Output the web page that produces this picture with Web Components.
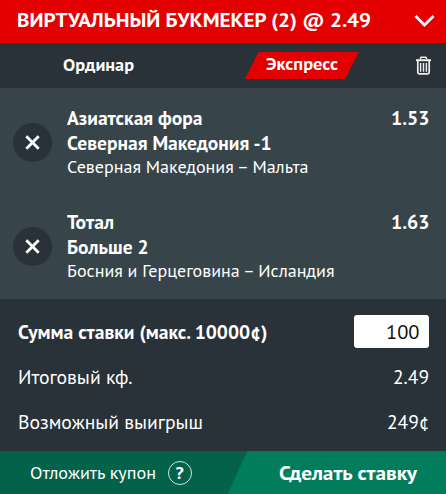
<!DOCTYPE html>
<html lang="ru">
<head>
<meta charset="utf-8">
<title>Купон</title>
<style>
  body {
    margin: 0;
    background: #283238;
    color: #fff;
    font-family: "PT Sans", "Noto Sans", "Open Sans", sans-serif;
  }
</style>
</head>
<body>

<bet-slip>
  <slip-header slot="header"><fit-text width="354">ВИРТУАЛЬНЫЙ БУКМЕКЕР (2) @ 2.49</fit-text></slip-header>
  <slip-tabs slot="tabs">
    <fit-text slot="single" width="71">Ординар</fit-text>
    <fit-text slot="express" width="72">Экспресс</fit-text>
  </slip-tabs>

  <bet-item>
    <fit-text slot="market" width="135.5">Азиатская фора</fit-text>
    <fit-text slot="pick" width="204.5">Северная Македония -1</fit-text>
    <fit-text slot="match" width="241.5">Северная Македония – Мальта</fit-text>
    <fit-text slot="odds" width="38.5">1.53</fit-text>
  </bet-item>
  <bet-item>
    <fit-text slot="market" width="47">Тотал</fit-text>
    <fit-text slot="pick" width="81.5">Больше 2</fit-text>
    <fit-text slot="match" width="267.5">Босния и Герцеговина – Исландия</fit-text>
    <fit-text slot="odds" width="38.5">1.63</fit-text>
  </bet-item>

  <slip-row slot="totals" class="stake">
    <fit-text slot="label" width="249.5">Сумма ставки (макс. 10000¢)</fit-text>
    <stake-field><fit-text width="33.5">100</fit-text></stake-field>
  </slip-row>
  <slip-row slot="totals">
    <fit-text slot="label" width="114.5">Итоговый кф.</fit-text>
    <fit-text width="36">2.49</fit-text>
  </slip-row>
  <slip-row slot="totals">
    <fit-text slot="label" width="185">Возможный выигрыш</fit-text>
    <fit-text width="42.5">249¢</fit-text>
  </slip-row>

  <slip-footer slot="footer">
    <fit-text slot="save" width="126">Отложить купон</fit-text>
    <fit-text slot="place" width="138">Сделать ставку</fit-text>
  </slip-footer>
</bet-slip>

<script>
function define(name, html) {
  customElements.define(
    name,
    class extends HTMLElement {
      constructor() {
        super();
        this.attachShadow({ mode: "open" });
        this.shadowRoot.innerHTML = html;
      }
    }
  );
}

define("bet-slip", `
  <style>
    :host {
      display: flex;
      flex-direction: column;
      width: 446px;
      height: 494px;
      overflow: hidden;
    }
    .items {
      box-sizing: border-box;
      height: 211px;
      padding-top: 1px;
      background: #37454b;
    }
    .totals {
      flex: 1;
      padding-top: 10px;
    }
  </style>
  <slot name="header"></slot>
  <slot name="tabs"></slot>
  <div class="items"><slot></slot></div>
  <div class="totals"><slot name="totals"></slot></div>
  <slot name="footer"></slot>
`);

define("slip-header", `
  <style>
    :host {
      box-sizing: border-box;
      display: flex;
      align-items: center;
      justify-content: space-between;
      height: 43px;
      padding: 0 11px 2px 17px;
      background: #e30000;
      font-size: 20px;
      font-weight: 700;
      line-height: 41px;
    }
    svg { display: block; }
  </style>
  <slot></slot>
  <svg width="21" height="14" viewBox="0 0 21 14" fill="none" stroke="#fff" stroke-width="2.8">
    <path d="M1.5 2 10.5 11 19.5 2"/>
  </svg>
`);

define("slip-tabs", `
  <style>
    :host {
      box-sizing: border-box;
      display: flex;
      align-items: center;
      height: 45px;
      padding: 0 14px 0 63px;
      font-size: 18px;
      font-weight: 700;
      line-height: 27px;
    }
    .single { width: 182px; height: 27px; margin-top: -3px; }
    .express {
      box-sizing: border-box;
      width: 114px;
      height: 27px;
      padding-left: 20.5px;
      background: #e30000;
      clip-path: polygon(13.5px 0, 100% 0, 100px 100%, 0 100%);
      line-height: 24px;
    }
    svg { display: block; margin-left: auto; }
  </style>
  <div class="single"><slot name="single"></slot></div>
  <div class="express"><slot name="express"></slot></div>
  <svg width="17" height="19" viewBox="0 0 17 19" fill="none" stroke="#eceeee">
    <path d="M1 4.2h15" stroke-width="2"/>
    <path d="M5.5 3.2V2.1Q5.5 1.2 6.4 1.2h4.2q.9 0 .9.9v1.1" stroke-width="1.5"/>
    <path d="M2.8 5v11.3q0 1.5 1.5 1.5h8.4q1.5 0 1.5-1.5V5" stroke-width="1.7"/>
    <path d="M5.6 7v8.8M8.5 7v8.8M11.4 7v8.8" stroke-width="1.4"/>
  </svg>
`);

define("bet-item", `
  <style>
    :host {
      box-sizing: border-box;
      display: grid;
      grid-template-columns: 39px 1fr auto;
      column-gap: 14.5px;
      height: 104px;
      padding: 16px 17px 16px 13px;
      font-size: 19.5px;
      font-weight: 700;
      line-height: 25px;
    }
    .remove {
      align-self: center;
      display: grid;
      place-items: center;
      width: 39px;
      height: 39px;
      border-radius: 50%;
      background: #283238;
    }
    .lines { display: flex; flex-direction: column; align-items: flex-start; }
    .match { font-size: 18px; font-weight: 400; line-height: 24px; }
  </style>
  <div class="remove">
    <svg width="15" height="15" viewBox="0 0 15 15" stroke="#fff" stroke-width="2.8">
      <path d="M1.3 1.3 13.7 13.7M13.7 1.3 1.3 13.7"/>
    </svg>
  </div>
  <div class="lines">
    <slot name="market"></slot>
    <slot name="pick"></slot>
    <div class="match"><slot name="match"></slot></div>
  </div>
  <slot name="odds"></slot>
`);

define("slip-row", `
  <style>
    :host {
      display: flex;
      align-items: center;
      justify-content: space-between;
      height: 45px;
      padding: 0 17px 0 17.5px;
      font-size: 19.5px;
      line-height: 46px;
    }
    :host(.stake) .label { font-weight: 700; }
  </style>
  <div class="label"><slot name="label"></slot></div>
  <slot></slot>
`);

define("stake-field", `
  <style>
    :host {
      box-sizing: border-box;
      display: flex;
      justify-content: flex-end;
      width: 75px;
      height: 33px;
      margin-top: -1px;
      padding-right: 10px;
      border-radius: 3px;
      background: #fff;
      color: #111;
      font-size: 19.5px;
      line-height: 34px;
    }
  </style>
  <slot></slot>
`);

define("slip-footer", `
  <style>
    :host {
      display: flex;
      height: 43px;
      background: #02634a;
      line-height: 44px;
    }
    .save {
      display: flex;
      align-items: center;
      gap: 12px;
      width: 198px;
      padding-left: 29.5px;
      font-size: 18px;
    }
    .help {
      box-sizing: border-box;
      width: 24px;
      height: 24px;
      border: 1px solid #d5e5e0;
      border-radius: 50%;
      font-size: 18px;
      font-weight: 700;
      line-height: 21px;
      text-align: center;
    }
    .place {
      flex: 1;
      padding-left: 51px;
      background: #027d5c;
      clip-path: polygon(20px 0, 100% 0, 100% 100%, 0 100%);
      font-size: 20px;
      font-weight: 700;
    }
  </style>
  <div class="save"><slot name="save"></slot><span class="help">?</span></div>
  <div class="place"><slot name="place"></slot></div>
`);

// Single line of text squeezed or stretched to the given width.
// Defined last, so the font styles of its parents are already in place.
customElements.define(
  "fit-text",
  class extends HTMLElement {
    constructor() {
      super();
      this.attachShadow({ mode: "open" });
      this.shadowRoot.innerHTML = `
        <style>
          :host { display: block; flex: none; white-space: nowrap; }
          span { display: inline-block; vertical-align: top; transform-origin: 0 50%; }
        </style>
        <span><slot></slot></span>
      `;
    }

    connectedCallback() {
      const span = this.shadowRoot.querySelector("span");
      const width = Number(this.getAttribute("width"));
      this.style.width = width + "px";
      span.style.transform = `scaleX(${width / span.getBoundingClientRect().width})`;
    }
  }
);
</script>
</body>
</html>
